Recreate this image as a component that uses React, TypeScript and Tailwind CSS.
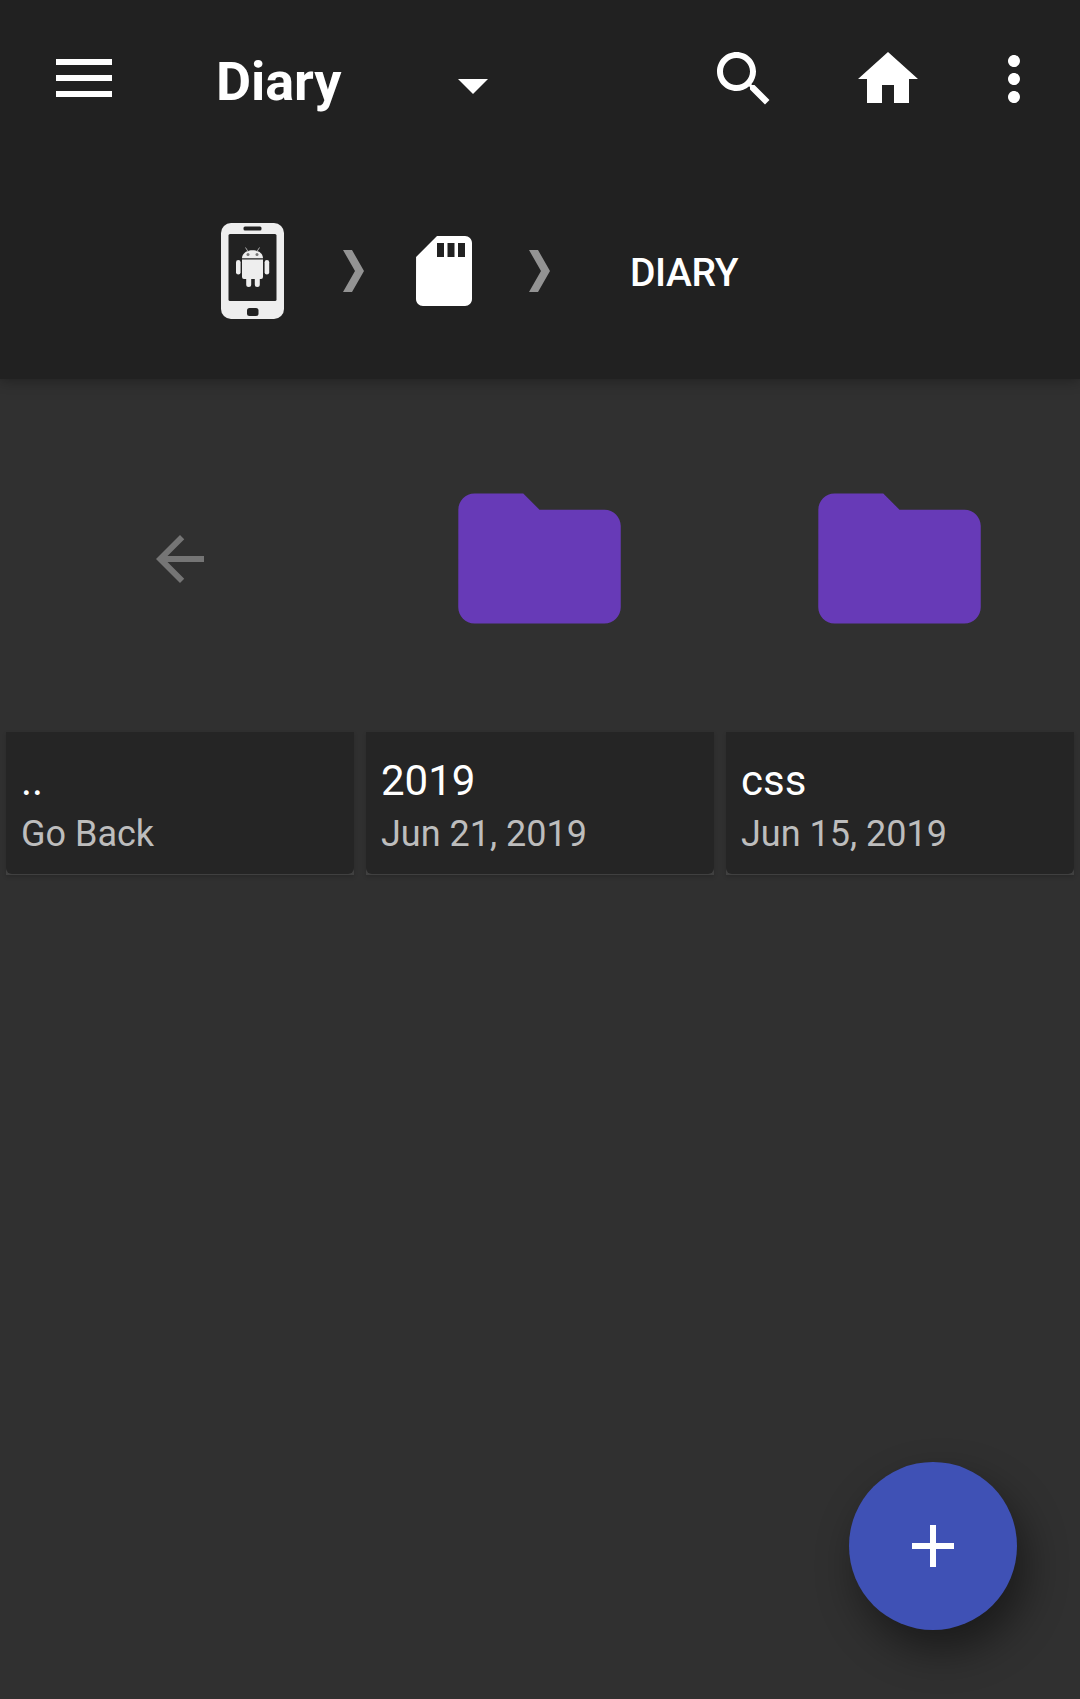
import React from 'react';

const ICON_PATHS = {
  search:
    'M15.5 14h-.79l-.28-.27C15.41 12.59 16 11.11 16 9.5 16 5.91 13.09 3 9.5 3S3 5.91 3 9.5 5.91 16 9.5 16c1.61 0 3.09-.59 4.23-1.57l.27.28v.79l5 4.99L20.49 19l-4.99-5zm-6 0C7.01 14 5 11.99 5 9.5S7.01 5 9.5 5 14 7.01 14 9.5 11.99 14 9.5 14z',
  home: 'M10 20v-6h4v6h5v-8h3L12 3 2 12h3v8z',
  more: 'M12 8c1.1 0 2-.9 2-2s-.9-2-2-2-2 .9-2 2 .9 2 2 2zm0 2c-1.1 0-2 .9-2 2s.9 2 2 2 2-.9 2-2-.9-2-2-2zm0 6c-1.1 0-2 .9-2 2s.9 2 2 2 2-.9 2-2-.9-2-2-2z',
  sdCard:
    'M18 2h-8L4.02 8 4 20c0 1.1.9 2 2 2h12c1.1 0 2-.9 2-2V4c0-1.1-.9-2-2-2zm-6 6h-2V4h2v4zm3 0h-2V4h2v4zm3 0h-2V4h2v4z',
  back: 'M20 11H7.83l5.59-5.59L12 4l-8 8 8 8 1.41-1.41L7.83 13H20v-2z',
  folder:
    'M10 4H4c-1.1 0-1.99.9-1.99 2L2 18c0 1.1.9 2 2 2h16c1.1 0 2-.9 2-2V8c0-1.1-.9-2-2-2h-8l-2-2z',
  add: 'M19 13h-6v6h-2v-6H5v-2h6V5h2v6h6v2z',
};

function Icon({ name, className }: { name: keyof typeof ICON_PATHS; className: string }) {
  return (
    <svg viewBox="0 0 24 24" fill="currentColor" className={`shrink-0 ${className}`} aria-hidden="true">
      <path d={ICON_PATHS[name]} />
    </svg>
  );
}

function PhoneIcon() {
  return (
    <svg viewBox="0 0 63 96" className="h-24 w-[63px] shrink-0 text-[#eeeeee]" fill="currentColor" aria-hidden="true">
      <rect width="63" height="96" rx="10" />
      <g fill="#222222">
        <rect x="22.5" y="3.5" width="18" height="4" rx="1.5" />
        <rect x="7.5" y="11" width="48" height="67" rx="1.5" />
        <rect x="26" y="85" width="11.5" height="8" rx="2.5" />
      </g>
      <rect x="15" y="37" width="4.6" height="14.5" rx="2.3" />
      <rect x="43.6" y="37" width="4.6" height="14.5" rx="2.3" />
      <path d="M21 36.500h21v17.500a2 2 0 0 1-2 2h-1.200v5.500a2.500 2.500 0 0 1-5 0V56h-3.600v5.500a2.500 2.500 0 0 1-5 0V56H23a2 2 0 0 1-2-2z" />
      <path d="M21 35.300c0-4.500 4.200-8 10.500-8s10.500 3.500 10.500 8z" />
      <path d="M24.500 24.500l2.500 4M38.500 24.500l-2.500 4" stroke="#aaaaaa" strokeWidth="1" />
      <circle cx="27" cy="31.500" r="1.500" fill="#777777" />
      <circle cx="36" cy="31.500" r="1.500" fill="#777777" />
    </svg>
  );
}

function Chevron({ className }: { className: string }) {
  return (
    <svg viewBox="0 0 21 42" fill="#939393" className={`h-[42px] w-[21px] shrink-0 ${className}`} aria-hidden="true">
      <path d="M0 0h9l12 21L9 42H0l12-21z" />
    </svg>
  );
}

function Header() {
  return (
    <header className="h-[379px] bg-[#212121] shadow-[0_2px_12px_rgba(0,0,0,0.3)]">
      <div className="flex h-[158px] items-center">
        <button aria-label="Open menu" className="mb-0.5 ml-14 flex w-14 shrink-0 flex-col gap-2.5">
          <span className="h-1.5 bg-white" />
          <span className="h-1.5 bg-white" />
          <span className="h-1.5 bg-white" />
        </button>
        <button className="ml-[104px] flex w-[272px] items-center justify-between pt-1.5">
          <span className="text-[54px] leading-[64px] font-bold tracking-[-0.1px]">Diary</span>
          <svg viewBox="0 0 30 15" fill="currentColor" className="mt-2 h-[15px] w-[30px]" aria-hidden="true">
            <path d="M0 0h30L15 15z" />
          </svg>
        </button>
        <div className="ml-auto flex items-center">
          <Icon name="search" className="mr-[72px] size-[72px]" />
          <Icon name="home" className="mr-[54px] size-[72px]" />
          <Icon name="more" className="mr-[30px] size-[72px]" />
        </div>
      </div>
      <nav className="flex h-[226px] items-center pl-[220.5px]">
        <PhoneIcon />
        <Chevron className="ml-[59.5px]" />
        <Icon name="sdCard" className="ml-[38px] size-[84px]" />
        <Chevron className="ml-[43px]" />
        <span className="ml-[80px] pt-1 text-[39px] leading-[46px] font-medium tracking-[-0.4px]">DIARY</span>
      </nav>
    </header>
  );
}

const ENTRIES = [
  { name: '..', detail: 'Go Back', folder: false },
  { name: '2019', detail: 'Jun 21, 2019', folder: true },
  { name: 'css', detail: 'Jun 15, 2019', folder: true },
];

function EntryCard({ name, detail, folder }: (typeof ENTRIES)[number]) {
  return (
    <article className="mx-1.5">
      <div className="flex h-[346px] items-center justify-center">
        {folder ? (
          <Icon name="folder" className="mr-px mb-px size-[195px] text-[#673ab7]" />
        ) : (
          <Icon name="back" className="size-[72px] text-[#757575]" />
        )}
      </div>
      <div className="bg-[#404040] pb-px shadow-[0_2px_4px_rgba(0,0,0,0.15)]">
        <div className="h-[142px] rounded-b-md bg-[#252525] pt-6 pl-[15px]">
          <h2 className="text-[42px] leading-[50px] text-white">{name}</h2>
          <p className="mt-[7px] text-[36px] leading-[42px] text-[#bdbdbd]">{detail}</p>
        </div>
      </div>
    </article>
  );
}

export default function App() {
  return (
    <div className="relative h-[1699px] w-[1080px] overflow-hidden bg-[#303030] font-[Roboto,sans-serif] text-white">
      <Header />
      <main className="grid grid-cols-3 pt-[7px]">
        {ENTRIES.map((entry) => (
          <EntryCard key={entry.name} {...entry} />
        ))}
      </main>
      <button
        aria-label="Add"
        className="absolute right-[63px] bottom-[69px] flex size-[168px] items-center justify-center rounded-full bg-[#3f51b5] shadow-[9px_20px_42px_rgba(0,0,0,0.45)]"
      >
        <Icon name="add" className="size-[72px]" />
      </button>
    </div>
  );
}
